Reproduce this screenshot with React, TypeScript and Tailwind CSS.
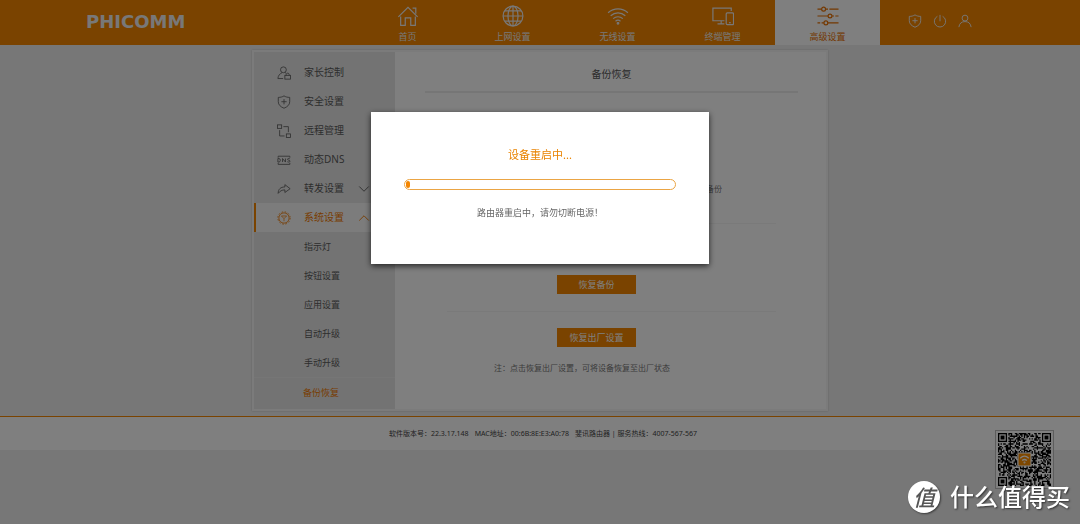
import { useMemo, type ReactNode } from "react";
import { ChevronDown, ChevronUp } from "lucide-react";

interface IconProps {
  className?: string;
  children: ReactNode;
  stroke?: number;
}

function Icon({ className, children, stroke = 1.3 }: IconProps) {
  return (
    <svg
      viewBox="0 0 24 24"
      className={className}
      fill="none"
      stroke="currentColor"
      strokeWidth={stroke}
      aria-hidden="true"
    >
      {children}
    </svg>
  );
}

const shield = (
  <>
    <path d="M12 1.500c2.800 1.800 6 2.600 9.800 2.600v7.400c0 5.400-4 8.800-9.800 11.200-5.800-2.400-9.800-5.800-9.800-11.200V4.100c3.800 0 7-.8 9.800-2.600z" />
    <path d="M12 7v9M7.500 11.500h9" />
  </>
);

const navItems = [
  {
    label: "首页",
    icon: (
      <>
        <path d="M1.500 13 12 2.500 22.500 13" />
        <path d="M17 3.500h3.500v6" />
        <path d="M4 12.500v9.700h5V14h6v8.200h5v-9.700" />
      </>
    ),
  },
  {
    label: "上网设置",
    icon: (
      <>
        <circle cx="12" cy="12" r="10.800" />
        <ellipse cx="12" cy="12" rx="5.500" ry="10.800" />
        <path d="M12 1.200v21.600M1.200 12h21.600M3 6.500h18M3 17.500h18" />
      </>
    ),
  },
  {
    label: "无线设置",
    icon: (
      <>
        <path d="M1.200 8.500c6.300-5.600 15.300-5.600 21.600 0" />
        <path d="M4 11.800c4.700-4.200 11.300-4.200 16 0" />
        <path d="M6.700 14.900c3.100-2.700 7.500-2.700 10.600 0" />
        <path d="M9.300 17.700c1.600-1.300 3.800-1.300 5.400 0" />
        <circle cx="12" cy="20" r="0.900" fill="currentColor" />
      </>
    ),
  },
  {
    label: "终端管理",
    icon: (
      <>
        <path d="M13.500 17.200H1V3.500h20v3" />
        <path d="M10 17.200v3M6 20.500h7.500" />
        <rect x="15.500" y="8.500" width="8" height="13" rx="1.200" />
        <path d="M18.500 19.300h2" />
      </>
    ),
  },
  {
    label: "高级设置",
    active: true,
    icon: (
      <>
        <path d="M0.500 4.500H5M9.500 4.500h2.500M13.500 4.500h10" />
        <circle cx="7.200" cy="4.500" r="2.100" />
        <path d="M0.500 12h11.500M16.500 12h2M20 12h3.500" />
        <circle cx="14.200" cy="12" r="2.100" />
        <path d="M0.500 19.500h3M5 19.500h2.500M12 19.500h11.500" />
        <circle cx="9.700" cy="19.500" r="2.100" />
      </>
    ),
  },
];

const sideItems = [
  {
    label: "家长控制",
    icon: (
      <>
        <circle cx="11" cy="6.500" r="5" />
        <path d="M1.500 21.500h9M1.500 21.500c.5-5 3-8 7-10M13.500 11.200l2 1" />
        <rect x="13.500" y="16" width="9.500" height="6.500" />
        <path d="M15.800 16v-1.500c0-3 5-3 5 0V16" />
      </>
    ),
  },
  { label: "安全设置", icon: shield },
  {
    label: "远程管理",
    icon: (
      <>
        <rect x="1" y="1.500" width="7" height="6" />
        <rect x="16" y="17" width="7" height="6" />
        <path d="M11 4.500h8.500V14M4.500 10.500v10H13" />
      </>
    ),
  },
  {
    label: "动态DNS",
    icon: (
      <>
        <path d="M2 8V5.500h20V8M2 17v2.500h20V17" />
        <path d="M1.500 15.500v-6h2c3 0 3 6 0 6zM9.500 15.500v-6l5 6v-6M22 10c-1.500-1-4-.7-4 .8 0 2.200 4.300 1 4.300 3.200 0 1.800-3 2-4.600.9" />
      </>
    ),
  },
  {
    label: "转发设置",
    chevron: ChevronDown,
    icon: <path d="M2 19.500c0-7 4-11 11.500-11V4.500l9 7-9 6.500v-4.500c-5 0-8.500 2-11.500 6z" />,
  },
  {
    label: "系统设置",
    chevron: ChevronUp,
    active: true,
    icon: (
      <>
        <circle cx="12" cy="12" r="8.800" />
        <circle cx="12" cy="12" r="10.600" strokeDasharray="2.700 2.850" />
        <path d="M7.500 8.500h9L12 13zM12 13v4.500" strokeWidth="1.200" />
      </>
    ),
  },
];

const subItems = ["指示灯", "按钮设置", "应用设置", "自动升级", "手动升级"];

// ── QR code
const QR_SIZE = 41;

function inFinder(x: number, y: number) {
  const far = QR_SIZE - 8;
  return (x < 8 && y < 8) || (x >= far && y < 8) || (x < 8 && y >= far);
}

function QrCode() {
  const path = useMemo(() => {
    let seed = 20171;
    let d = "";
    for (let y = 0; y < QR_SIZE; y++) {
      for (let x = 0; x < QR_SIZE; x++) {
        seed = (seed * 1103515245 + 12345) % 2147483648;
        if (inFinder(x, y)) continue;
        if (seed / 2147483648 < 0.54) d += `M${x} ${y}h1v1h-1z`;
      }
    }
    return d;
  }, []);

  const finders = [
    [0, 0],
    [QR_SIZE - 7, 0],
    [0, QR_SIZE - 7],
  ];

  return (
    <svg viewBox="0 0 41 41" className="block w-full" role="img" aria-label="QR">
      <path d={path} fill="#000" />
      {finders.map(([x, y]) => (
        <g key={`${x}-${y}`}>
          <rect x={x + 0.5} y={y + 0.5} width="6" height="6" fill="none" stroke="#000" />
          <rect x={x + 2} y={y + 2} width="3" height="3" fill="#000" />
        </g>
      ))}
      <rect x="15.500" y="15.500" width="10" height="10" fill="#ff9000" stroke="#fff" strokeWidth="0.800" />
      <g fill="none" stroke="#fff" strokeWidth="1">
        <path d="M17.200 19.500c2-1.900 4.600-1.900 6.600 0M18.700 21.300c1.100-1 2.500-1 3.600 0" />
        <circle cx="20.500" cy="22.800" r="0.300" />
      </g>
    </svg>
  );
}

function Header() {
  return (
    <header className="flex h-[45px] bg-[#f48600] pl-[86px] text-[#f0f0f0]">
      <div className="flex items-center pb-0.5 font-['DejaVu_Sans',sans-serif] text-lg font-bold">
        PHICOMM
      </div>
      <nav className="ml-auto flex">
        {navItems.map((item) => (
          <a
            key={item.label}
            href="#"
            className={`flex w-[105px] flex-col items-center pt-[5px] text-[9px] leading-3 ${
              item.active ? "bg-white text-[#e87000]" : ""
            }`}
          >
            <Icon className="mb-1 size-[22px]">{item.icon}</Icon>
            {item.label}
          </a>
        ))}
      </nav>
      <div className="flex w-[200px] items-center gap-[11px] pb-1 pl-7">
        <button aria-label="安全">
          <Icon className="size-[14px]" stroke={1.6}>{shield}</Icon>
        </button>
        <button aria-label="重启">
          <Icon className="size-[14px]" stroke={1.6}>
            <path d="M12 1.500v11M7.500 4a9.700 9.700 0 1 0 9 0" />
          </Icon>
        </button>
        <button aria-label="账户">
          <Icon className="size-[14px]" stroke={1.6}>
            <circle cx="12" cy="7" r="5" />
            <path d="M1.500 22.500C2.500 16 6 13 12 13s9.500 3 10.500 9.500" />
          </Icon>
        </button>
      </div>
    </header>
  );
}

function Sidebar() {
  return (
    <aside className="w-[141px] shrink-0 bg-[#e6e6e6] pt-1.5 pb-0.5 text-[#5c5c5c]">
      <ul>
        {sideItems.map(({ label, icon, chevron: Chevron, active }) => (
          <li key={label}>
            <a
              href="#"
              className={`flex h-[29px] items-center border-l-2 pl-[21px] text-[10px] ${
                active ? "border-[#f48600] bg-[#f9f9f9] text-[#f07800]" : "border-transparent"
              }`}
            >
              <Icon className="mr-[13px] size-[14px]" stroke={1.4}>{icon}</Icon>
              {label}
              {Chevron && <Chevron className="mr-[22px] ml-auto size-[18px]" strokeWidth={1.2} />}
            </a>
          </li>
        ))}
      </ul>
      <ul className="text-[9px]">
        {subItems.map((label) => (
          <li key={label}>
            <a href="#" className="flex h-[29px] items-center pl-[50px]">
              {label}
            </a>
          </li>
        ))}
        <li>
          <a
            href="#"
            className="flex h-[30px] items-center border-t border-[#ececec] pl-[49px] text-[#f07800]"
          >
            备份恢复
          </a>
        </li>
      </ul>
    </aside>
  );
}

function BackupPanel() {
  return (
    <section className="flex-1 bg-white pr-7 pl-[30px] text-[#777]">
      <h1 className="border-b-2 border-[#ececec] pt-[14px] pb-[9px] text-center text-[10px] leading-4 text-[#555]">
        备份恢复
      </h1>
      <div className="px-[22px] text-[8px]">
        <div className="flex h-[131px] items-end justify-end border-b border-[#f4f4f4] pr-[54px] pb-7">
          <span className="leading-3">备份</span>
        </div>
        <div className="flex h-[88px] items-end border-b border-[#f4f4f4] pb-[17px] pl-[110px]">
          <button className="h-[19px] w-[79px] bg-[#f48600] text-[9px] text-white">恢复备份</button>
        </div>
        <div className="pt-4 pl-[110px]">
          <button className="block h-[19px] w-[79px] bg-[#f48600] text-[9px] text-white">
            恢复出厂设置
          </button>
        </div>
        <p className="pt-[15px] pl-[47px] leading-3">注：点击恢复出厂设置，可将设备恢复至出厂状态</p>
      </div>
    </section>
  );
}

function Footer() {
  return (
    <footer className="relative mt-[5px] border-t border-[#f48600] bg-white">
      <p className="flex h-[33px] items-center justify-center gap-1.5 pt-0.5 pl-1.5 text-[7px] text-[#444]">
        <span>软件版本号：22.3.17.148</span>
        <span>MAC地址：00:6B:8E:E3:A0:78</span>
        <span>斐讯路由器 | 服务热线：4007-567-567</span>
      </p>
      <div className="absolute top-[13px] right-[26px] w-[59px] border border-[#bbb] bg-white p-0.5">
        <QrCode />
      </div>
    </footer>
  );
}

function RebootDialog({ progress }: { progress: number }) {
  return (
    <div className="fixed inset-0 flex items-start justify-center bg-black/50 pt-28">
      <div
        role="dialog"
        aria-modal="true"
        aria-labelledby="reboot-title"
        className="w-[338px] bg-white px-[33px] pt-[35px] pb-[44px] text-center shadow-[0_2px_6px_rgba(0,0,0,0.7)]"
      >
        <h2 id="reboot-title" className="text-[11px] leading-4 text-[#e98300]">
          设备重启中...
        </h2>
        <div
          role="progressbar"
          aria-label="重启进度"
          aria-valuenow={progress}
          className="mt-4 h-[11px] overflow-hidden rounded-full border border-[#eba544] p-px"
        >
          <div className="h-full rounded-full bg-[#f48600]" style={{ width: `${progress}%` }} />
        </div>
        <p className="mt-4 text-[9px] leading-3.5 text-[#666]">路由器重启中，请勿切断电源！</p>
      </div>
    </div>
  );
}

function Watermark() {
  return (
    <div className="fixed right-2.5 bottom-[11px] flex items-center gap-2.5 text-white">
      <span className="flex size-8 items-center justify-center rounded-full bg-white text-[22px] leading-none font-medium text-[#555] italic shadow-[1px_1px_2px_rgba(0,0,0,0.5)]">
        值
      </span>
      <span className="text-[24px] leading-8 font-medium [text-shadow:1px_1px_2px_rgba(0,0,0,0.6)]">
        什么值得买
      </span>
    </div>
  );
}

export default function App() {
  return (
    <div className="min-h-screen bg-[#efefef] font-['Noto_Sans','Noto_Sans_CJK_SC',sans-serif]">
      <Header />
      <main className="mx-auto mt-[5px] flex w-full max-w-[576px] border-2 border-[#f6f6f6] shadow-[0_0_2px_rgba(0,0,0,0.2)]">
        <Sidebar />
        <BackupPanel />
      </main>
      <Footer />
      <RebootDialog progress={1.5} />
      <Watermark />
    </div>
  );
}
